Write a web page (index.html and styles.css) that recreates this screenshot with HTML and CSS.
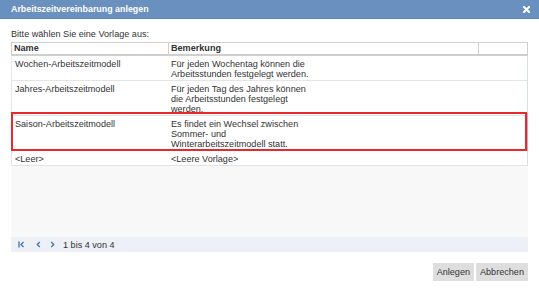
FILE: index.html
```html
<!DOCTYPE html>
<html>
<head>
    <title>Arbeitszeitvereinbarung anlegen</title>
    <link rel="stylesheet" href="styles.css">
</head>
<body>
    <section class="dialog">
        <div class="titlebar">
            <span class="title">Arbeitszeitvereinbarung anlegen</span>
            <svg class="close" width="7" height="7" viewBox="0 0 7 7">
                <path d="M1 1 L6 6 M6 1 L1 6" stroke="#fff" stroke-width="2" stroke-linecap="square"/>
            </svg>
        </div>

        <div class="content">
            <p class="prompt">Bitte wählen Sie eine Vorlage aus:</p>

            <div class="grid">
                <div class="grid-head">
                    <div class="cell">Name</div>
                    <div class="cell">Bemerkung</div>
                    <div class="cell"></div>
                </div>

                <div class="grid-body">
                    <div class="row">
                        <div class="cell">Wochen-Arbeitszeitmodell</div>
                        <div class="cell">Für jeden Wochentag können die<br>Arbeitsstunden festgelegt werden.</div>
                    </div>
                    <div class="row">
                        <div class="cell">Jahres-Arbeitszeitmodell</div>
                        <div class="cell">Für jeden Tag des Jahres können<br>die Arbeitsstunden festgelegt<br>werden.</div>
                    </div>
                    <div class="row marked">
                        <div class="cell">Saison-Arbeitszeitmodell</div>
                        <div class="cell">Es findet ein Wechsel zwischen<br>Sommer- und<br>Winterarbeitszeitmodell statt.</div>
                    </div>
                    <div class="row">
                        <div class="cell">&lt;Leer&gt;</div>
                        <div class="cell">&lt;Leere Vorlage&gt;</div>
                    </div>
                    <div class="filler"></div>
                </div>

                <div class="pager">
                    <svg class="pager-icon" width="7" height="7" viewBox="0 0 7 7">
                        <path d="M1 0.5 V6.5 M5.5 1 L3 3.5 L5.5 6" stroke="#4a78b4" stroke-width="1.4" fill="none"/>
                    </svg>
                    <svg class="pager-icon prev" width="5" height="7" viewBox="0 0 5 7">
                        <path d="M3.8 1 L1.3 3.5 L3.8 6" stroke="#4a78b4" stroke-width="1.4" fill="none"/>
                    </svg>
                    <svg class="pager-icon next" width="5" height="7" viewBox="0 0 5 7">
                        <path d="M1.2 1 L3.7 3.5 L1.2 6" stroke="#4a78b4" stroke-width="1.4" fill="none"/>
                    </svg>
                    <span class="pager-text">1 bis 4 von 4</span>
                </div>
            </div>
        </div>

        <div class="actions">
            <button class="btn">Anlegen</button>
            <button class="btn">Abbrechen</button>
        </div>
    </section>
</body>
</html>
```

FILE: styles.css
```css
:root {
    --color-title: #6990be;
    --color-text: #333;
    --color-line: #cfcfcf;
    --color-row-line: #e4e4e4;
    --color-blue-line: #d3deea;
    --color-pager: #edf0f6;
    --color-empty: #f8f8f8;
    --color-mark: #e8282b;
}

html,
body {
    margin: 0;
    padding: 0;
}

body {
    font-family: "Liberation Sans", Arial, sans-serif;
    font-size: 9.1px;
    color: var(--color-text);
    background: #fff;
}

.dialog {
    width: 539px;
    height: 289px;
    display: flex;
    flex-direction: column;
}

.titlebar {
    height: 18px;
    background: var(--color-title);
    border-bottom: 1px solid #5d85b7;
    display: flex;
    align-items: center;
    justify-content: space-between;
    padding: 0 9px 0 11px;
}

.title {
    color: #fff;
    font-weight: bold;
    font-size: 8.9px;
}

.close {
    display: block;
}

.content {
    padding: 0 11px;
}

.prompt {
    margin: 9px 0 0;
    line-height: 12px;
    height: 12px;
}

.grid {
    margin-top: 2px;
}

.grid-head {
    display: grid;
    grid-template-columns: 157px 310px 1fr;
    border: 1px solid var(--color-line);
    border-bottom-width: 2px;
    height: 11px;
    line-height: 11px;
}

.grid-head .cell {
    font-weight: bold;
    padding-left: 2px;
    border-right: 1px solid var(--color-line);
}

.grid-head .cell:last-child {
    border-right: none;
}

.grid-body {
    height: 181px;
    display: flex;
    flex-direction: column;
}

.row {
    display: grid;
    grid-template-columns: 156px 1fr;
    border-left: 1px solid #e2e6ec;
    border-right: 1px solid var(--color-blue-line);
    border-bottom: 1px solid var(--color-row-line);
    padding: 3px 0 1px;
    line-height: 10px;
    position: relative;
    background: #fff;
}

.row .cell {
    padding-left: 3px;
    white-space: nowrap;
}

.row .cell:first-child {
    padding-left: 3px;
}

.marked::after {
    content: "";
    position: absolute;
    top: -4px;
    left: -1px;
    right: 0;
    bottom: -1px;
    border: 2px solid var(--color-mark);
    box-shadow: 1px 1px 1px rgba(0, 0, 0, 0.18);
}

.filler {
    flex: 1;
    background: var(--color-empty);
}

.pager {
    height: 15px;
    background: var(--color-pager);
    display: flex;
    align-items: center;
    padding-left: 7px;
}

.pager-icon {
    display: block;
}

.pager-icon.prev {
    margin-left: 11px;
}

.pager-icon.next {
    margin-left: 9px;
}

.pager-text {
    margin-left: 8px;
}

.actions {
    display: flex;
    justify-content: flex-end;
    gap: 2px;
    padding: 11px 11px 0;
}

.btn {
    font-family: "Liberation Sans", Arial, sans-serif;
    font-size: 9.1px;
    color: var(--color-text);
    background: #dedede;
    border: none;
    height: 18px;
    padding: 0 4px;
    margin: 0;
    cursor: pointer;
}
```
